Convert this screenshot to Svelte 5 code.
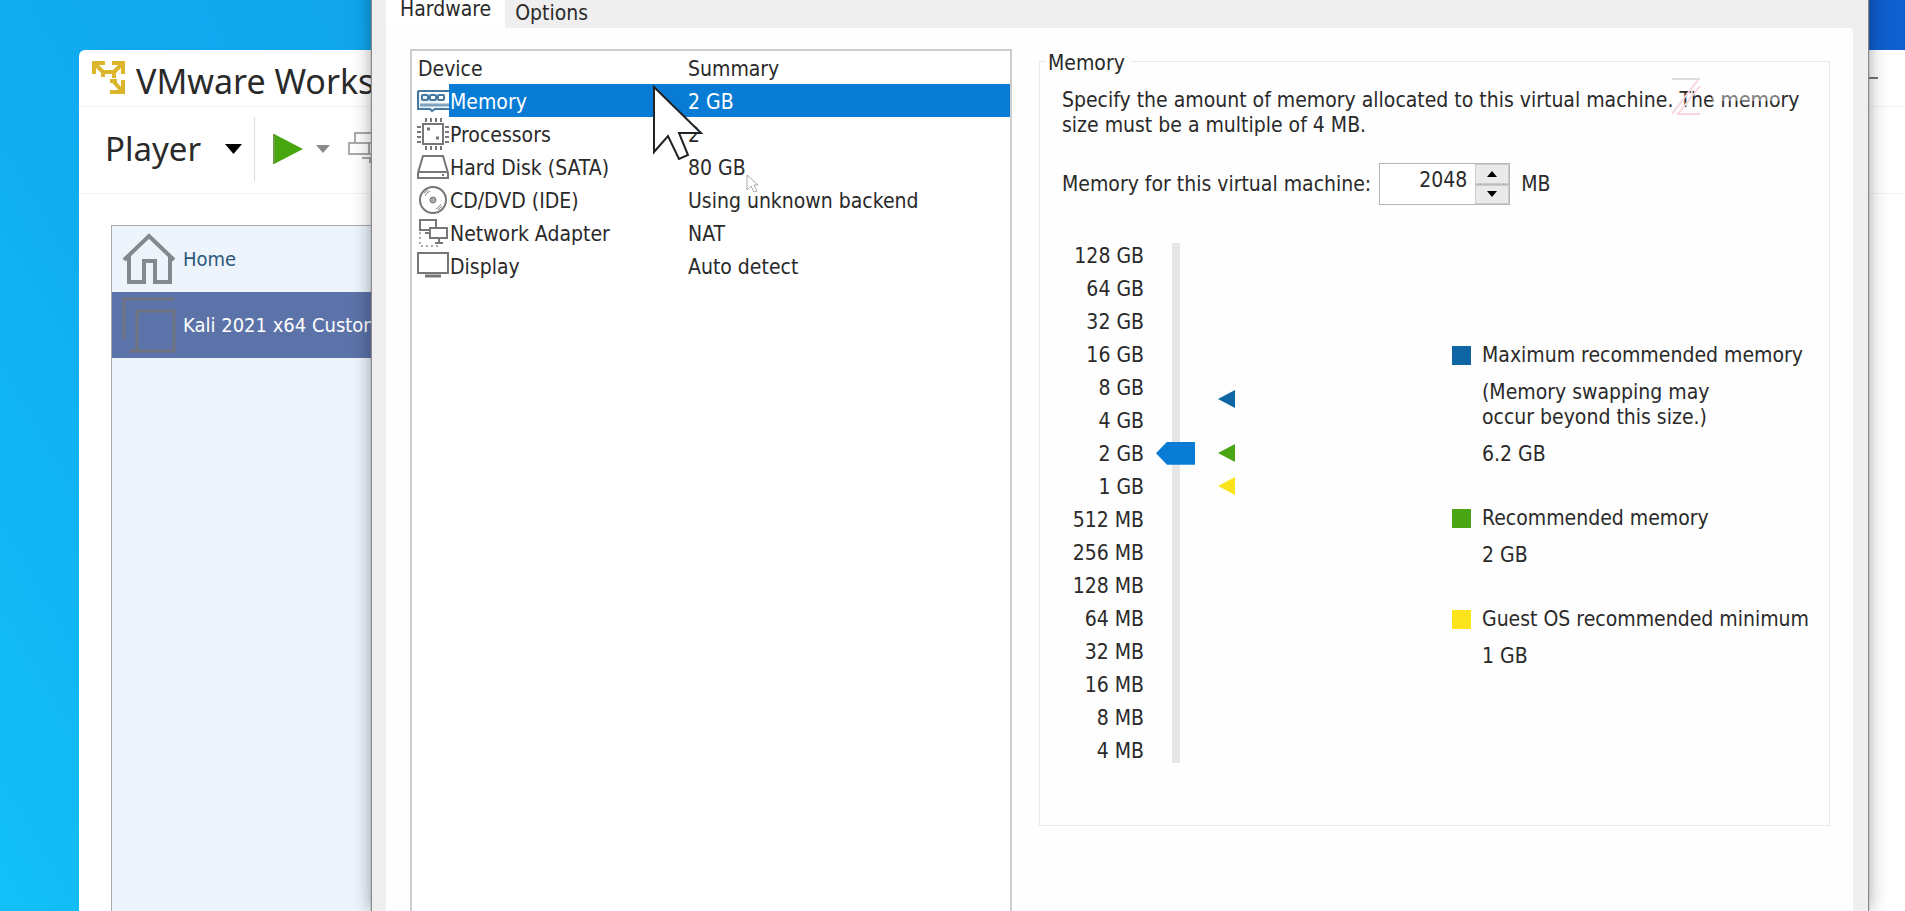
<script>
  const devices = [
    { icon: 'memory', name: 'Memory', summary: '2 GB' },
    { icon: 'cpu', name: 'Processors', summary: '2' },
    { icon: 'disk', name: 'Hard Disk (SATA)', summary: '80 GB' },
    { icon: 'cd', name: 'CD/DVD (IDE)', summary: 'Using unknown backend' },
    { icon: 'network', name: 'Network Adapter', summary: 'NAT' },
    { icon: 'display', name: 'Display', summary: 'Auto detect' }
  ];
  const sizes = [
    '128 GB', '64 GB', '32 GB', '16 GB', '8 GB', '4 GB', '2 GB', '1 GB',
    '512 MB', '256 MB', '128 MB', '64 MB', '32 MB', '16 MB', '8 MB', '4 MB'
  ];
  const legend = [
    { color: '#0f66a5', label: 'Maximum recommended memory', note: '(Memory swapping may occur beyond this size.)', value: '6.2 GB', mb: 6349 },
    { color: '#4aa514', label: 'Recommended memory', value: '2 GB', mb: 2048 },
    { color: '#fbe41c', label: 'Guest OS recommended minimum', value: '1 GB', mb: 1024 }
  ];
  // The scale runs from 4 MB (0) to 128 GB (15), one step for each doubling.
  const step = (mb) => Math.log2(mb / 4);

  let selected = $state(0);
  let memory = $state(2048);
  let level = $derived(step(memory));
</script>

<div class="desktop">
  <section class="player" aria-label="VMware">
    <header class="titlebar">
      <svg class="logo" width="34" height="36" viewBox="0 0 34 36" fill="none" stroke="#dcb62a" stroke-width="4">
        <path d="M2 14V3h11M3 4l8 8" />
        <path d="M20 3h11v11M30 4l-8 8" />
        <path d="M31 20v12H18M30 31l-8-9" />
        <path d="M9 12h15M11 11v6M22 11v7M18 21h7" />
      </svg>
      <h1>VMware Works</h1>
      <button class="minimize" aria-label="Minimize"></button>
    </header>
    <div class="toolbar">
      <button class="menu">
        Player
        <svg width="17" height="10" viewBox="0 0 17 10"><path d="M0 0h17L8.500 10z" fill="#000" /></svg>
      </button>
      <span class="divider"></span>
      <button class="tool" aria-label="Play">
        <svg width="31" height="32" viewBox="0 0 31 32"><path d="M1 1l29 15L1 31z" fill="#46a710" /><path d="M1 1v30" stroke="#6c9a45" stroke-width="2" /></svg>
      </button>
      <button class="tool" aria-label="Play options">
        <svg width="14" height="8" viewBox="0 0 14 8"><path d="M0 0h14L7 8z" fill="#8b8b8b" /></svg>
      </button>
      <button class="tool devices" aria-label="Devices">
        <svg width="36" height="34" viewBox="0 0 36 34" fill="none" stroke="#a9a9a9" stroke-width="2"><path d="M7 11V1h26v10M1 11h20v11H1zM21 11h14v11H21M14 26h8v4h10" /></svg>
      </button>
    </div>
    <nav class="library">
      <button class="entry">
        <svg width="54" height="52" viewBox="0 0 54 52" fill="none" stroke="#84898e" stroke-width="4"><path d="M2 27L27 3l25 24M7 23v26h15V28h11v21h15V23" /></svg>
        Home
      </button>
      <button class="entry current">
        <svg width="54" height="56" viewBox="0 0 54 56" fill="none" stroke="#6f7382" stroke-width="3"><path d="M2 42V2h50M15 14h37v40H15zM8 54h8" /></svg>
        Kali 2021 x64 Custom
      </button>
    </nav>
  </section>

  <section class="dialog" aria-label="Virtual machine settings">
    <div class="tabs" role="tablist">
      <button role="tab" aria-selected="true" class="tab active">Hardware</button>
      <button role="tab" aria-selected="false" class="tab">Options</button>
    </div>
    <div class="panel">
      <div class="list">
        <table>
          <thead>
            <tr><th colspan="2">Device</th><th>Summary</th></tr>
          </thead>
          <tbody>
            {#each devices as device, i}
              <tr class:selected={selected === i} onclick={() => (selected = i)}>
                <td class="icon">
                  <svg width="32" height="32" viewBox="0 0 32 32" fill="none" stroke="#777" stroke-width="2">
                    {#if device.icon === 'memory'}
                      <g stroke="#47789f"><path d="M1 6h31M1 6v18h12l2 2 3-2h14" fill="#e9f3fb" /><rect x="5" y="10" width="6" height="5" rx="1" /><rect x="13" y="10" width="6" height="5" rx="1" /><rect x="21" y="10" width="6" height="5" rx="1" /><path d="M3 20h29" stroke-width="3" stroke="#7ea3c0" /></g>
                    {:else if device.icon === 'cpu'}
                      <rect x="6" y="6" width="20" height="20" />
                      <path d="M8 2h17M8 30h17" stroke-width="4" stroke-dasharray="2 3" />
                      <path d="M2 8v17M30 8v17" stroke-width="4" stroke-dasharray="2 3" />
                      <path d="M10 11h3M19 20h3" stroke-width="3" />
                    {:else if device.icon === 'disk'}
                      <path d="M6 5h20l5 17v5H1v-5zM1 21h30" /><path d="M25 24h2" />
                    {:else if device.icon === 'cd'}
                      <circle cx="16" cy="16" r="13" /><circle cx="16" cy="16" r="3" fill="#aaa" stroke-width="1" /><path d="M8 12a9 9 0 0 1 5-5M7 9l4-3M24 20a9 9 0 0 1-5 5M25 22l-4 4" stroke="#888" stroke-width="1" />
                    {:else if device.icon === 'network'}
                      <path d="M12 13H3V3h16v7M13 11h17v10H13zM22 21v4M18 26h8M8 16h5" />
                      <path d="M3 15v14h18" stroke="#aaa" stroke-dasharray="2 3" />
                    {:else}
                      <rect x="1" y="3" width="30" height="20" /><path d="M8 26h16" stroke-width="3" />
                    {/if}
                  </svg>
                </td>
                <td class="name">{device.name}</td>
                <td>{device.summary}</td>
              </tr>
            {/each}
          </tbody>
        </table>
      </div>

      <fieldset>
        <legend>Memory</legend>
        <p>Specify the amount of memory allocated to this virtual machine. The memory size must be a multiple of 4 MB.</p>
        <div class="amount">
          <label for="memory-size">Memory for this virtual machine:</label>
          <span class="spin">
            <input id="memory-size" type="text" inputmode="numeric" bind:value={memory} />
            <span class="steppers">
              <button aria-label="Increase" onclick={() => (memory = Number(memory) + 4)}><svg width="10" height="6" viewBox="0 0 10 6"><path d="M0 6h10L5 0z" /></svg></button>
              <button aria-label="Decrease" onclick={() => (memory = Number(memory) - 4)}><svg width="10" height="6" viewBox="0 0 10 6"><path d="M0 0h10L5 6z" /></svg></button>
            </span>
          </span>
          <span class="unit">MB</span>
        </div>
        <div class="chooser">
          <ol class="scale">
            {#each sizes as size}<li>{size}</li>{/each}
          </ol>
          <input class="slider" type="range" min="0" max="15" step="any" aria-label="Memory size" value={level} oninput={(e) => (memory = Math.round(2 ** Number(e.currentTarget.value)) * 4)} />
          <div class="marks">
            {#each legend as item}
              <svg width="17" height="18" viewBox="0 0 17 18" style:bottom="{(step(item.mb) / 15) * 100}%"><path d="M0 9L17 0v18z" fill={item.color} /></svg>
            {/each}
          </div>
          <dl>
            {#each legend as item}
              <div class="item">
                <dt><span class="swatch" style:background={item.color}></span>{item.label}</dt>
                {#if item.note}<dd class="note">{item.note}</dd>{/if}
                <dd>{item.value}</dd>
              </div>
            {/each}
          </dl>
        </div>
      </fieldset>
    </div>
  </section>

  <svg class="watermark" width="130" height="42" viewBox="0 0 130 42" fill="none">
    <path d="M42 12h70v13H42z" fill="#fff" opacity="0.4" />
    <path d="M2 3h28" stroke="#ddd" stroke-width="2" />
    <path d="M28 4L2 38M30 10L8 38h22" stroke="#f7d6dc" stroke-width="2" />
  </svg>
  <svg class="pointer" width="52" height="78" viewBox="0 0 52 78"><path d="M2 2l47 46H27l9 22-9 4-11-23L2 67z" fill="#fff" stroke="#222" stroke-width="2" /></svg>
  <svg class="pointer-small" width="14" height="20" viewBox="0 0 14 20"><path d="M1 1l11 10H8l3 6-3 1-3-6-4 4z" fill="#fff" stroke="#aaa" /></svg>
</div>

<style>
  :global(body) { margin: 0; }
  .desktop {
    position: relative;
    height: 100vh;
    overflow: hidden;
    background: linear-gradient(60deg, #12c0f8 0%, #10abf0 22%, #10a5ec 37%, #0f5fce 98%);
    font: 21px/25px "DejaVu Sans Condensed", "DejaVu Sans", sans-serif;
    color: #2a2a2a;
  }
  button, input { font: inherit; color: inherit; }
  button { margin: 0; padding: 0; border: 0; background: none; }
  svg { display: block; flex: none; }

  .player {
    position: absolute;
    inset: 50px -120px 0 79px;
    display: flex;
    flex-direction: column;
    background: #fff;
    border-radius: 6px 0 0 0;
    font-family: "Noto Sans", sans-serif;
  }
  .titlebar {
    display: flex;
    align-items: center;
    gap: 10px;
    height: 56px;
    padding: 0 14px 0 13px;
    border-bottom: 1px solid #f2f2f2;
  }
  h1 { margin: 0; padding-top: 5px; flex: 1; font-size: 34px; line-height: 50px; font-weight: 400; }
  .minimize { width: 22px; height: 2px; margin-right: 133px; background: #777; }
  .toolbar {
    display: flex;
    align-items: center;
    height: 87px;
    padding: 0 0 2px 26px;
    box-sizing: border-box;
    border-bottom: 1px solid #f2f2f2;
  }
  .menu { display: flex; align-items: center; gap: 24px; font-size: 33px; line-height: 50px; }
  .divider { width: 1px; height: 64px; margin: 0 18px 0 12px; background: #ddd; }
  .tool { margin-right: 12px; }
  .devices { margin-left: 6px; }
  .library {
    flex: 1;
    display: flex;
    flex-direction: column;
    margin: 31px 200px 0 32px;
    border: 1px solid #aaa;
    border-bottom: 0;
    background: #edf4fc;
  }
  .entry {
    display: flex;
    align-items: center;
    gap: 7px;
    height: 66px;
    padding-left: 10px;
    font: 20px/25px "DejaVu Sans Condensed", "DejaVu Sans", sans-serif;
    color: #2d587b;
    text-align: left;
  }
  .current { background: #5c73a9; color: #fff; }

  .dialog {
    position: absolute;
    inset: -40px 37px 0 372px;
    display: flex;
    flex-direction: column;
    padding: 32px 15px 0 14px;
    background: #efefef;
    box-shadow: 0 0 1px 1px #888, 0 0 18px rgba(0, 0, 0, 0.4);
  }
  .tabs { display: flex; align-items: flex-end; }
  .tab { height: 30px; padding: 0 10px; line-height: 20px; }
  .active { height: 36px; padding: 0 14px 3px; background: #fff; }
  .panel {
    flex: 1;
    display: grid;
    grid-template-columns: 602px minmax(0, 1fr);
    gap: 27px;
    padding: 21px 23px 0 24px;
    background: #fefefe;
    border-radius: 0 4px 0 0;
  }
  .list { border: 2px solid #ccc; border-bottom: 0; background: #fff; }
  table { width: 100%; border-collapse: collapse; table-layout: auto; }
  th, td { box-sizing: border-box; height: 33px; padding: 4px 0 0; text-align: left; font-weight: 400; }
  th { padding-left: 6px; }
  th:last-child { padding-left: 0; }
  .icon { width: 37px; padding-top: 0; }
  .icon svg { margin-left: 5px; }
  .name { width: 239px; padding-left: 1px; }
  .selected td:not(.icon) { background: #087cd5; color: #fff; }

  fieldset {
    align-self: start;
    min-width: 0;
    margin: -2px 0 0;
    padding: 12px 0 57px 22px;
    border: 1px solid #e9e9e9;
  }
  legend { margin-left: -16px; padding: 4px 6px 0 2px; }
  p { max-width: 750px; margin: 0; }
  .amount { display: flex; align-items: center; gap: 8px; margin-top: 25px; }
  .spin { display: flex; box-sizing: border-box; width: 131px; height: 42px; border: 1px solid #b5b5b5; }
  .spin input {
    flex: 1;
    min-width: 0;
    padding: 0 8px 8px 0;
    border: 0;
    outline: 0;
    background: #fff;
    text-align: right;
  }
  .unit { padding-left: 3px; }
  .steppers { display: grid; grid-template-rows: 1fr 1fr; width: 34px; gap: 1px; background: #bbb; }
  .steppers button { display: grid; place-items: center; border: 1px solid #ccc; background: #eaeaea; }
  .chooser { display: flex; margin-top: 34px; }
  .scale { width: 82px; margin: 0; padding: 1px 0 0; list-style: none; text-align: right; line-height: 33px; }
  .slider {
    appearance: none;
    writing-mode: vertical-lr;
    direction: rtl;
    width: 39px;
    height: 520px;
    margin: 4px 23px 0 12px;
    background: linear-gradient(90deg, transparent 16px, #e6e6e6 16px, #e6e6e6 24px, transparent 24px);
  }
  .slider::-webkit-slider-thumb {
    appearance: none;
    width: 39px;
    height: 23px;
    background: #087cd5;
    clip-path: polygon(0 50%, 11px 0, 100% 0, 100% 100%, 11px 100%);
  }
  .marks { position: relative; width: 17px; height: 497px; margin-top: 15px; }
  .marks svg { position: absolute; left: 0; margin-bottom: -9px; }
  dl { width: 377px; margin: 104px 0 0 auto; }
  .item { margin-bottom: 39px; }
  dt { display: flex; align-items: center; gap: 11px; }
  .swatch { width: 19px; height: 19px; }
  dd { margin: 12px 0 0 30px; }
  .note { max-width: 260px; }

  .watermark { position: absolute; left: 1670px; top: 76px; }
  .pointer { position: absolute; left: 652px; top: 85px; }
  .pointer-small { position: absolute; left: 746px; top: 174px; }
</style>
